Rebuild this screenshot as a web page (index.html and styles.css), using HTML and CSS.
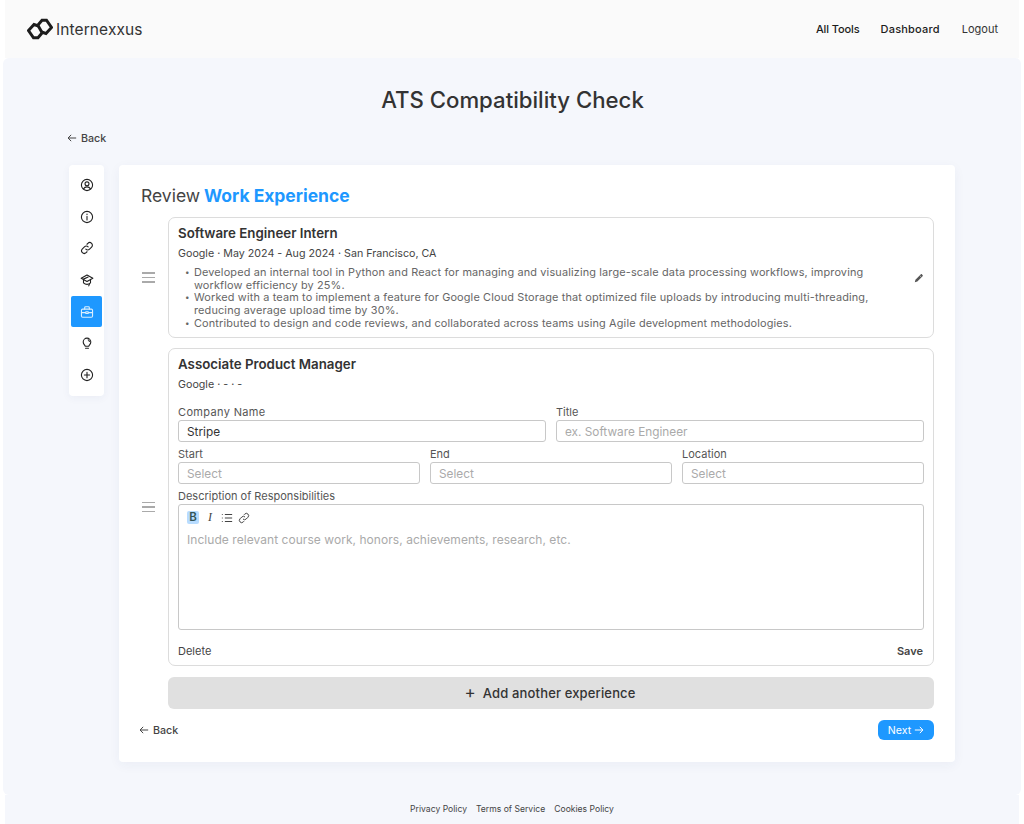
FILE: index.html
```html
<!DOCTYPE html>
<html lang="en">
<head>
<meta charset="utf-8">
<title>ATS Compatibility Check</title>
<link rel="stylesheet" href="styles.css">
</head>
<body>
<header class="topbar">
  <a class="brand">
    <svg class="logo" viewBox="0 0 26 22" width="26" height="22" fill="none" stroke="#1c1c1c" stroke-width="2.900" stroke-linejoin="miter">
      <path d="M11.500 8 7 6.500 1.500 12.500 6.500 19.800 11 19.800 15 15"/>
      <path d="M14.500 14 19 15.500 24.500 9.500 19.500 2.200 15 2.200 11 7"/>
      <path d="M11 7.500 15 14.500"/>
    </svg>
    <span class="brand-name">Internexxus</span>
  </a>
  <nav class="topnav">
    <a class="nav-link nav-tools">All Tools</a>
    <a class="nav-link nav-dash">Dashboard</a>
    <a class="nav-link nav-logout">Logout</a>
  </nav>
</header>
<main class="panel">
  <h1 class="page-title">ATS Compatibility Check</h1>
  <a class="back back-top"><svg class="arrow" viewBox="0 0 12 12" width="10" height="10"><path d="M11 6H1.500M5 2.200 1.300 6 5 9.800"/></svg>Back</a>
  <div class="workspace">
    <aside class="steps">
      <div class="step"><svg viewBox="0 0 24 24" class="ico"><circle cx="12" cy="12" r="9.600"/><circle cx="12" cy="10" r="3.400"/><path d="M6 18.600c1.400-2.400 3.600-3.400 6-3.400s4.600 1 6 3.400"/></svg></div>
      <div class="step"><svg viewBox="0 0 24 24" class="ico"><circle cx="12" cy="12" r="9.600"/><path d="M12 11v6M12 7v.6"/></svg></div>
      <div class="step"><svg viewBox="0 0 24 24" class="ico"><path d="M10 14a4.500 4.500 0 0 0 6.400 0l3.500-3.500a4.500 4.500 0 0 0-6.400-6.400l-1.500 1.500"/><path d="M14 10a4.500 4.500 0 0 0-6.400 0l-3.500 3.500a4.500 4.500 0 0 0 6.400 6.400l1.500-1.500"/></svg></div>
      <div class="step"><svg viewBox="0 0 24 24" class="ico"><path d="M12 3.500 22 9l-10 5.500L2 9z"/><path d="M6 12v5c2 1.800 4 2.500 6 2.500s4-.7 6-2.500v-5"/><path d="M6 10.500 14 7"/><path d="M15 22l1-2.500"/></svg></div>
      <div class="step step-active"><svg viewBox="0 0 24 24" class="ico ico-white"><rect x="2.500" y="7" width="19" height="14" rx="2"/><path d="M8 7V4.500A1.500 1.500 0 0 1 9.500 3h5A1.500 1.500 0 0 1 16 4.500V7M2.500 13h7M14.500 13h7"/><rect x="10" y="11.500" width="4" height="3"/></svg></div>
      <div class="step"><svg viewBox="0 0 24 24" class="ico"><path d="M8.800 17.500c-.3-2-3.300-3.300-3.300-7.300a6.500 6.500 0 0 1 13 0c0 4-3 5.300-3.300 7.300z"/><path d="M9.500 21h5"/><path d="M14 6.500c1.300.6 2 1.800 2 3"/></svg></div>
      <div class="step"><svg viewBox="0 0 24 24" class="ico"><circle cx="12" cy="12" r="9.600"/><path d="M12 7.500v9M7.500 12h9"/></svg></div>
    </aside>
    <section class="card">
      <h2 class="card-title">Review <span class="accent">Work Experience</span></h2>
      <div class="exp-row">
        <div class="handle"><span></span><span></span><span></span></div>
        <article class="exp exp-first">
          <div class="exp-body">
            <h3 class="exp-title">Software Engineer Intern</h3>
            <p class="exp-meta">Google · May 2024 - Aug 2024 · San Francisco, CA</p>
            <ul class="bullets">
              <li>Developed an internal tool in Python and React for managing and visualizing large-scale data processing workflows, improving workflow efficiency by 25%.</li>
              <li>Worked with a team to implement a feature for Google Cloud Storage that optimized file uploads by introducing multi-threading, reducing average upload time by 30%.</li>
              <li>Contributed to design and code reviews, and collaborated across teams using Agile development methodologies.</li>
            </ul>
          </div>
          <svg class="pencil" viewBox="0 0 12 12" width="10" height="10"><path d="M1 11l.7-3L8 1.700c.5-.5 1-.5 1.400-.1l1 1c.4.4.4.9-.1 1.400L4 10.300z"/><path class="pencil-band" d="M6.800 3 9 5.200"/></svg>
        </article>
      </div>
      <div class="exp-row">
        <div class="handle"><span></span><span></span><span></span></div>
        <article class="exp exp-form">
          <h3 class="exp-title">Associate Product Manager</h3>
          <p class="exp-meta">Google · - · -</p>
          <div class="field-grid two">
            <label class="field"><span class="label label-wide">Company Name</span><span class="input filled">Stripe</span></label>
            <label class="field"><span class="label">Title</span><span class="input">ex. Software Engineer</span></label>
          </div>
          <div class="field-grid three">
            <label class="field"><span class="label">Start</span><span class="input">Select</span></label>
            <label class="field"><span class="label">End</span><span class="input">Select</span></label>
            <label class="field"><span class="label">Location</span><span class="input">Select</span></label>
          </div>
          <div class="field">
            <span class="label">Description of Responsibilities</span>
            <div class="editor">
              <div class="toolbar">
                <span class="tool tool-on">B</span>
                <span class="tool tool-i">I</span>
                <svg class="tool-svg" viewBox="0 0 14 14" width="12" height="12"><path d="M4.500 3H13M4.500 7H13M4.500 11H13M1 3h1M1 7h1M1 11h1"/></svg>
                <svg class="tool-svg" viewBox="0 0 24 24" width="12" height="12"><path d="M10 14a4.500 4.500 0 0 0 6.400 0l3.500-3.500a4.500 4.500 0 0 0-6.400-6.400l-1.500 1.500"/><path d="M14 10a4.500 4.500 0 0 0-6.400 0l-3.500 3.500a4.500 4.500 0 0 0 6.400 6.400l1.500-1.500"/></svg>
              </div>
              <p class="placeholder">Include relevant course work, honors, achievements, research, etc.</p>
            </div>
          </div>
          <div class="form-actions"><a class="delete">Delete</a><a class="save">Save</a></div>
        </article>
      </div>
      <button class="add-btn" type="button"><span class="plus">+</span>Add another experience</button>
      <div class="card-nav">
        <a class="back"><svg class="arrow" viewBox="0 0 12 12" width="10" height="10"><path d="M11 6H1.500M5 2.200 1.300 6 5 9.800"/></svg>Back</a>
        <button class="next" type="button">Next<svg class="arrow arrow-white" viewBox="0 0 12 12" width="10" height="10"><path d="M1 6h9.500M7 2.200 10.700 6 7 9.800"/></svg></button>
      </div>
    </section>
  </div>
</main>
<footer class="footer">
  <a>Privacy Policy</a><a>Terms of Service</a><a>Cookies Policy</a>
</footer>
</body>
</html>
```
FILE: styles.css
```css
* { box-sizing: border-box; }
html, body { margin: 0; padding: 0; background: #fff; }
body {
  font-family: Inter, "Open Sans", sans-serif;
  color: #333;
  width: 1024px;
  height: 824px;
  overflow: hidden;
  display: flex;
  flex-direction: column;
}
h1, h2, h3, p, ul { margin: 0; padding: 0; }

.topbar {
  height: 58px;
  margin: 0 5px;
  background: #fafafa;
  display: flex;
  align-items: center;
  justify-content: space-between;
  padding: 0 21px 0 22px;
}
.brand { display: flex; align-items: center; gap: 3px; }
.logo { display: block; }
.brand-name { font-size: 15.500px; color: #333; letter-spacing: .1px; }
.topnav { display: flex; align-items: center; gap: 22px; font-size: 11px; }
.nav-link { color: #222; }
.nav-tools { font-weight: 500; letter-spacing: -.1px; color: #1c1c1c; margin-right: -1px; }
.nav-dash { font-weight: 500; letter-spacing: .2px; color: #1c1c1c; }
.nav-logout { color: #333; }

.panel {
  margin: 0 3px;
  height: 737px;
  background: #f5f7fc;
  border-radius: 6px;
  padding: 0 65px 0 66px;
  display: flex;
  flex-direction: column;
}
.page-title {
  margin-top: 29px;
  text-align: center;
  font-size: 22.200px;
  line-height: 26px;
  font-weight: 500;
  color: #333;
}
.back {
  display: inline-flex;
  align-items: center;
  gap: 4px;
  margin-left: -1px;
  font-size: 10.700px;
  font-weight: 500;
  color: #444;
}
.back-top { margin: 18px 0 0 -2px; height: 14px; align-self: flex-start; }
.arrow { fill: none; stroke: #444; stroke-width: 1.200; display: block; }
.arrow-white { stroke: #fff; }

.workspace { display: flex; gap: 15px; margin-top: 20px; align-items: flex-start; }
.steps {
  width: 35px;
  height: 231px;
  flex: none;
  background: #fff;
  border-radius: 4px;
  padding: 4px 2px 0;
  box-shadow: 0 2px 8px rgba(40, 60, 120, .05);
}
.step { height: 31.700px; display: flex; align-items: center; justify-content: center; border-radius: 2px; }
.step-active { background: #1e98ff; }
.ico { width: 14px; height: 14px; fill: none; stroke: #222; stroke-width: 1.900; stroke-linecap: round; stroke-linejoin: round; display: block; }
.ico-white { stroke: #d9eeff; }

.card {
  width: 836px;
  height: 597px;
  background: #fff;
  border-radius: 4px;
  padding: 20px 21px 0;
  box-shadow: 0 3px 12px rgba(40, 60, 120, .05);
  display: flex;
  flex-direction: column;
}
.card-title { font-size: 17.500px; line-height: 22px; font-weight: 400; color: #444; margin: 0 0 10px 1px; }
.accent { color: #1e98ff; font-weight: 700; letter-spacing: -.03px; margin-left: -1px; }

.exp-row { display: flex; align-items: center; margin-bottom: 10px; }
.handle { width: 28px; flex: none; display: flex; flex-direction: column; gap: 3px; padding-left: 2px; padding-right: 13px; }
.handle span { display: block; height: 1.500px; background: #aaa; }
.exp {
  width: 766px;
  border: 1px solid #dcdcdc;
  border-radius: 7px;
  padding: 7px 9px 0;
}
.exp-first { height: 121px; display: flex; align-items: center; padding: 0 9px; }
.exp-body { flex: 1; align-self: flex-start; padding-top: 7px; }
.exp-title { font-size: 13.300px; line-height: 17px; font-weight: 600; color: #333; }
.exp-meta { font-size: 10.700px; line-height: 14px; margin-top: 5px; color: #444; }
.bullets { list-style: none; margin-top: 5px; width: 712px; font-size: 10.900px; line-height: 12.700px; letter-spacing: .15px; color: #666; }
.bullets li { position: relative; padding-left: 16px; }
.bullets li::before { content: "•"; position: absolute; left: 7px; font-size: 8px; }
.pencil { fill: #555; margin-left: 4px; flex: none; }
.pencil-band { fill: none; stroke: #ddd; stroke-width: .8; }

.exp-form { height: 318px; }
.field-grid { display: grid; gap: 10px; }
.two { grid-template-columns: 368px 368px; margin-top: 13px; }
.three { grid-template-columns: repeat(3, 242px); margin-top: 5px; }
.field { display: flex; flex-direction: column; }
.exp-form > .field { margin-top: 5px; }
.label { font-size: 11px; line-height: 14px; margin-bottom: 1px; color: #555; }
.label-wide { letter-spacing: .35px; }
.input {
  height: 22px;
  border: 1px solid #c8c8c8;
  border-radius: 3px;
  font-size: 11.800px;
  line-height: 20px;
  padding: 1px 0 0 8px;
  color: #aaa;
}
.filled { color: #333; }
.editor { height: 126px; border: 1px solid #c8c8c8; border-radius: 3px; padding: 6px 8px; }
.toolbar { display: flex; align-items: center; gap: 5px; height: 13px; }
.tool { width: 12px; height: 13px; font-size: 11.500px; line-height: 13px; text-align: center; color: #444; font-weight: 600; border-radius: 2px; display: block; }
.tool-on { background: #b8dcff; color: #355; }
.tool-i { font-style: italic; font-weight: 500; font-family: "Liberation Serif", serif; font-size: 12px; }
.tool-svg { fill: none; stroke: #444; stroke-width: 1.200; display: block; }
.tool-svg:last-child { stroke-width: 2; }
.placeholder { font-size: 12px; line-height: 14px; letter-spacing: .05px; color: #aaa; margin-top: 9px; }
.form-actions { display: flex; justify-content: space-between; margin-top: 14px; font-size: 11px; line-height: 14px; color: #444; }
.save { font-weight: 600; margin-right: 1px; }

.add-btn {
  display: block;
  font-family: inherit;
  width: 766px;
  height: 32px;
  margin: 1px 0 0 28px;
  padding: 0 2px 2px 0;
  background: #e0e0e0;
  border: 0;
  border-radius: 6px;
  font-size: 13px;
  letter-spacing: .15px;
  font-weight: 500;
  color: #333;
}
.plus { font-size: 17px; font-weight: 400; margin-right: 7px; }
.card-nav { display: flex; justify-content: space-between; align-items: center; margin-top: 11px; width: 794px; }
.next {
  font-family: inherit;
  width: 56px;
  height: 20px;
  border: 0;
  border-radius: 6px;
  background: #1e98ff;
  color: #fff;
  font-size: 10.600px;
  display: flex;
  align-items: center;
  justify-content: center;
  gap: 3px;
}
.footer {
  height: 29px;
  margin: 0 5px;
  padding-bottom: 2px;
  background: #f5f7fc;
  display: flex;
  align-items: center;
  justify-content: center;
  gap: 9px;
  font-size: 8.600px;
  color: #444;
}
```
